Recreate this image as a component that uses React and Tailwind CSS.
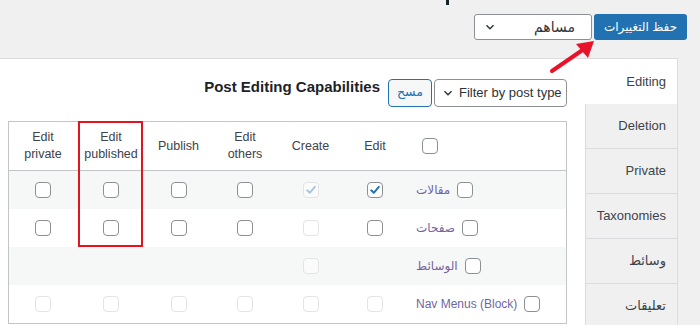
import React from "react";

const font = { fontFamily: '"Liberation Sans", "DejaVu Sans", "Noto Sans", sans-serif' };

function Check({ s }) {
  // s: off | on | dis | disOn
  const disabled = s === "dis" || s === "disOn";
  const checked = s === "on" || s === "disOn";
  return (
    <span
      className={
        "inline-flex h-[16px] w-[16px] items-center justify-center rounded-[4px] border " +
        (disabled ? "border-[#e4e4e6] bg-white/50" : "border-[#8c8f94] bg-white")
      }
    >
      {checked && (
        <svg width="12" height="12" viewBox="0 0 12 12">
          <path
            d="M2.2 6.3 L4.8 8.8 L9.8 2.8"
            fill="none"
            stroke={disabled ? "#a7c4e0" : "#2271b1"}
            strokeWidth="1.9"
            strokeLinecap="round"
            strokeLinejoin="round"
          />
        </svg>
      )}
    </span>
  );
}

const widths = ["w-[68px]", "w-[68px]", "w-[67px]", "w-[66px]", "w-[65px]", "w-[64px]"];

const headers = [
  ["Edit", "private"],
  ["Edit", "published"],
  ["Publish"],
  ["Edit", "others"],
  ["Create"],
  ["Edit"],
];

const rows = [
  { label: "مقالات", cells: ["off", "off", "off", "off", "disOn", "on"], bg: "bg-[#f6f7f7]" },
  { label: "صفحات", cells: ["off", "off", "off", "off", "dis", "off"], bg: "bg-white" },
  { label: "الوسائط", cells: [null, null, null, null, "dis", null], bg: "bg-[#f6f7f7]" },
  { label: "Nav Menus (Block)", cells: ["dis", "dis", "dis", "dis", "dis", "dis"], bg: "bg-white" },
];

const tabs = ["Editing", "Deletion", "Private", "Taxonomies", "وسائط", "تعليقات"];

export default function App() {
  return (
    <div className="relative h-[325px] w-[700px] overflow-hidden bg-[#f0f0f1] text-[#1d2327]" style={font}>
      {/* top bar */}
      <div className="relative h-[58px]">
        <div className="absolute left-[446px] top-0 h-[5px] w-[3px] bg-[#1d2327]" />
        <div className="flex justify-end gap-[2px] pr-[13px] pt-[14px]">
          <div className="flex h-[26px] w-[118px] items-center justify-between rounded-[3px] border border-[#8c8f94] bg-white pl-[10px] pr-[16px]">
            <svg width="10" height="10" viewBox="0 0 10 10">
              <path d="M1.5 3.2 L5 6.7 L8.5 3.2" fill="none" stroke="#2c3338" strokeWidth="1.4" />
            </svg>
            <span className="text-[14px] leading-none text-[#2c3338]">مساهم</span>
          </div>
          <div className="flex h-[26px] w-[93px] items-center justify-center rounded-[3px] bg-[#2271b1] text-[12px] text-white">
            حفظ التغييرات
          </div>
        </div>
      </div>

      {/* panel */}
      <div className="flex h-[267px] w-[678px] border-r border-t border-[#dcdcde]">
        <div className="w-[585px] bg-white">
          <div className="flex items-center justify-end gap-[2px] pr-[18px] pt-[19px]">
            <div className="mb-[12px] mr-[6px] text-[15px] font-bold leading-[17px] text-[#1d2327]">
              Post Editing Capabilities
            </div>
            <div className="flex h-[28px] w-[44px] items-center justify-center rounded-[4px] border border-[#2271b1] bg-[#f6f7f7] text-[12.5px] text-[#2271b1]">
              مسح
            </div>
            <div className="flex h-[28px] w-[133px] items-center gap-[6px] rounded-[4px] border border-[#8c8f94] bg-white pl-[8px]">
              <svg width="10" height="10" viewBox="0 0 10 10">
                <path d="M1.5 3.2 L5 6.7 L8.5 3.2" fill="none" stroke="#2c3338" strokeWidth="1.4" />
              </svg>
              <span className="text-[13px] text-[#2c3338]">Filter by post type</span>
            </div>
          </div>

          {/* table */}
          <div className="relative ml-[8px] mt-[14px] w-[559px] border border-[#c3c4c7]">
            <div className="flex h-[49px] border-b border-[#c3c4c7]">
              {headers.map((h, i) => (
                <div
                  key={i}
                  className={widths[i] + " flex flex-col items-center justify-center text-[12.5px] leading-[17px] text-[#3c434a]"}
                >
                  {h.map((t) => (
                    <span key={t}>{t}</span>
                  ))}
                </div>
              ))}
              <div className="flex flex-1 items-center pl-[15px]">
                <Check s="off" />
              </div>
            </div>
            {rows.map((r, ri) => (
              <div key={ri} className={"flex h-[38px] items-center " + r.bg}>
                {r.cells.map((c, ci) => (
                  <div key={ci} className={widths[ci] + " flex items-center justify-center"}>
                    {c && <Check s={c} />}
                  </div>
                ))}
                <div className="flex flex-1 items-center gap-[7px] pl-[9px]">
                  <span className="text-[12px] text-[#72669f]">{r.label}</span>
                  <Check s="off" />
                </div>
              </div>
            ))}
            {/* highlight box */}
            <div className="absolute left-[69px] top-[-1px] h-[126px] w-[65px] border-2 border-[#e3131f]" />
          </div>
        </div>

        {/* tabs */}
        <div className="flex w-[92px] flex-col">
          {tabs.map((t, i) => (
            <div
              key={t}
              className={
                "flex h-[45px] shrink-0 items-center justify-end pr-[11px] text-[13px] text-[#3c434a] " +
                (i === 0 ? "bg-white" : "border-b border-l border-[#dcdcde] bg-[#f0f0f1]")
              }
            >
              {t}
            </div>
          ))}
        </div>
      </div>

      {/* arrow */}
      <svg className="absolute left-0 top-0" width="700" height="325" viewBox="0 0 700 325">
        <line x1="552" y1="71" x2="584" y2="49" stroke="#e8132b" strokeWidth="4" strokeLinecap="round" />
        <polygon points="594,41 576,44 588,58" fill="#e8132b" />
      </svg>
    </div>
  );
}
